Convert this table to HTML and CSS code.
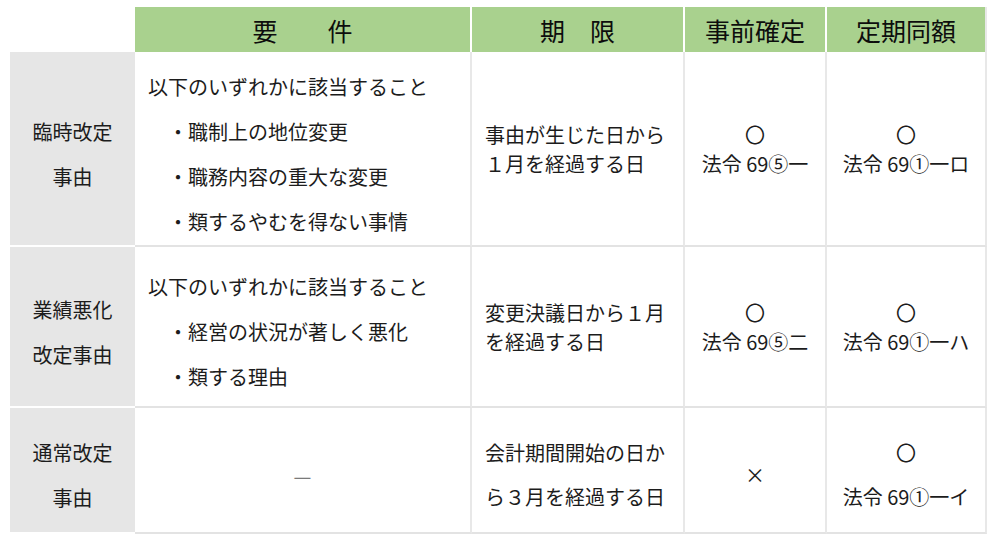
FILE: index.html
```html
<!DOCTYPE html>
<html lang="ja">
<head>
<meta charset="utf-8">
<link rel="stylesheet" href="styles.css">
</head>
<body>
<div class="table">
  <div class="corner"></div>
  <div class="head">要　　件</div>
  <div class="head">期　限</div>
  <div class="head">事前確定</div>
  <div class="head last">定期同額</div>

  <div class="side">臨時改定<br>事由</div>
  <div class="cell req">
    <div>以下のいずれかに該当すること</div>
    <div class="item">・職制上の地位変更</div>
    <div class="item">・職務内容の重大な変更</div>
    <div class="item">・類するやむを得ない事情</div>
  </div>
  <div class="cell period">事由が生じた日から<br>１月を経過する日</div>
  <div class="cell mark">〇<br>法令 69⑤一</div>
  <div class="cell mark last">〇<br>法令 69①一ロ</div>

  <div class="side">業績悪化<br>改定事由</div>
  <div class="cell req">
    <div>以下のいずれかに該当すること</div>
    <div class="item">・経営の状況が著しく悪化</div>
    <div class="item">・類する理由</div>
  </div>
  <div class="cell period">変更決議日から１月<br>を経過する日</div>
  <div class="cell mark">〇<br>法令 69⑤二</div>
  <div class="cell mark last">〇<br>法令 69①一ハ</div>

  <div class="side">通常改定<br>事由</div>
  <div class="cell dash"><span>—</span></div>
  <div class="cell period wide">会計期間開始の日か<br>ら３月を経過する日</div>
  <div class="cell mark wide">×</div>
  <div class="cell mark wide last">〇<br>法令 69①一イ</div>
</div>
</body>
</html>
```

FILE: styles.css
```css
html, body {
  margin: 0;
  padding: 0;
  background: #ffffff;
}

body {
  font-family: "Noto Sans CJK JP", "Noto Sans", sans-serif;
  color: #1c1c1c;
  font-size: 20px;
}

.table {
  display: grid;
  grid-template-columns: 125px 337px 213px 142px 160px;
  grid-template-rows: 45px 195px 161px 126px;
  margin: 7px 0 0 10px;
  width: 977px;
}

.corner {
  background: #ffffff;
}

.head {
  background: #a9d18e;
  color: #0d0d0d;
  font-size: 25px;
  display: flex;
  align-items: center;
  justify-content: center;
  border-right: 2px solid #ffffff;
  line-height: 1;
  padding-top: 1px;
  box-sizing: border-box;
}

.head.last {
  border-right: 2px solid #e8e8e8;
}

.side {
  background: #e6e6e6;
  border-bottom: 2px solid #ffffff;
  display: flex;
  align-items: center;
  justify-content: center;
  text-align: center;
  line-height: 45px;
  padding-top: 10px;
  box-sizing: border-box;
}

.cell {
  background: #ffffff;
  border-right: 2px solid #e8e8e8;
  border-bottom: 2px solid #e3e3e3;
  box-sizing: border-box;
  display: flex;
  flex-direction: column;
  justify-content: center;
  padding-top: 10px;
}

.req {
  padding-left: 13px;
  line-height: 45px;
}

.req .item {
  padding-left: 20px;
}

.period {
  padding-left: 13px;
  line-height: 29px;
  padding-top: 0;
}

.period.wide {
  line-height: 44px;
  padding-top: 10px;
}

.mark {
  text-align: center;
  line-height: 29px;
  padding-top: 0;
}

.mark.wide {
  line-height: 44px;
  padding-top: 10px;
}

.dash {
  align-items: center;
}

.dash span {
  color: #7a7a7a;
}
```
